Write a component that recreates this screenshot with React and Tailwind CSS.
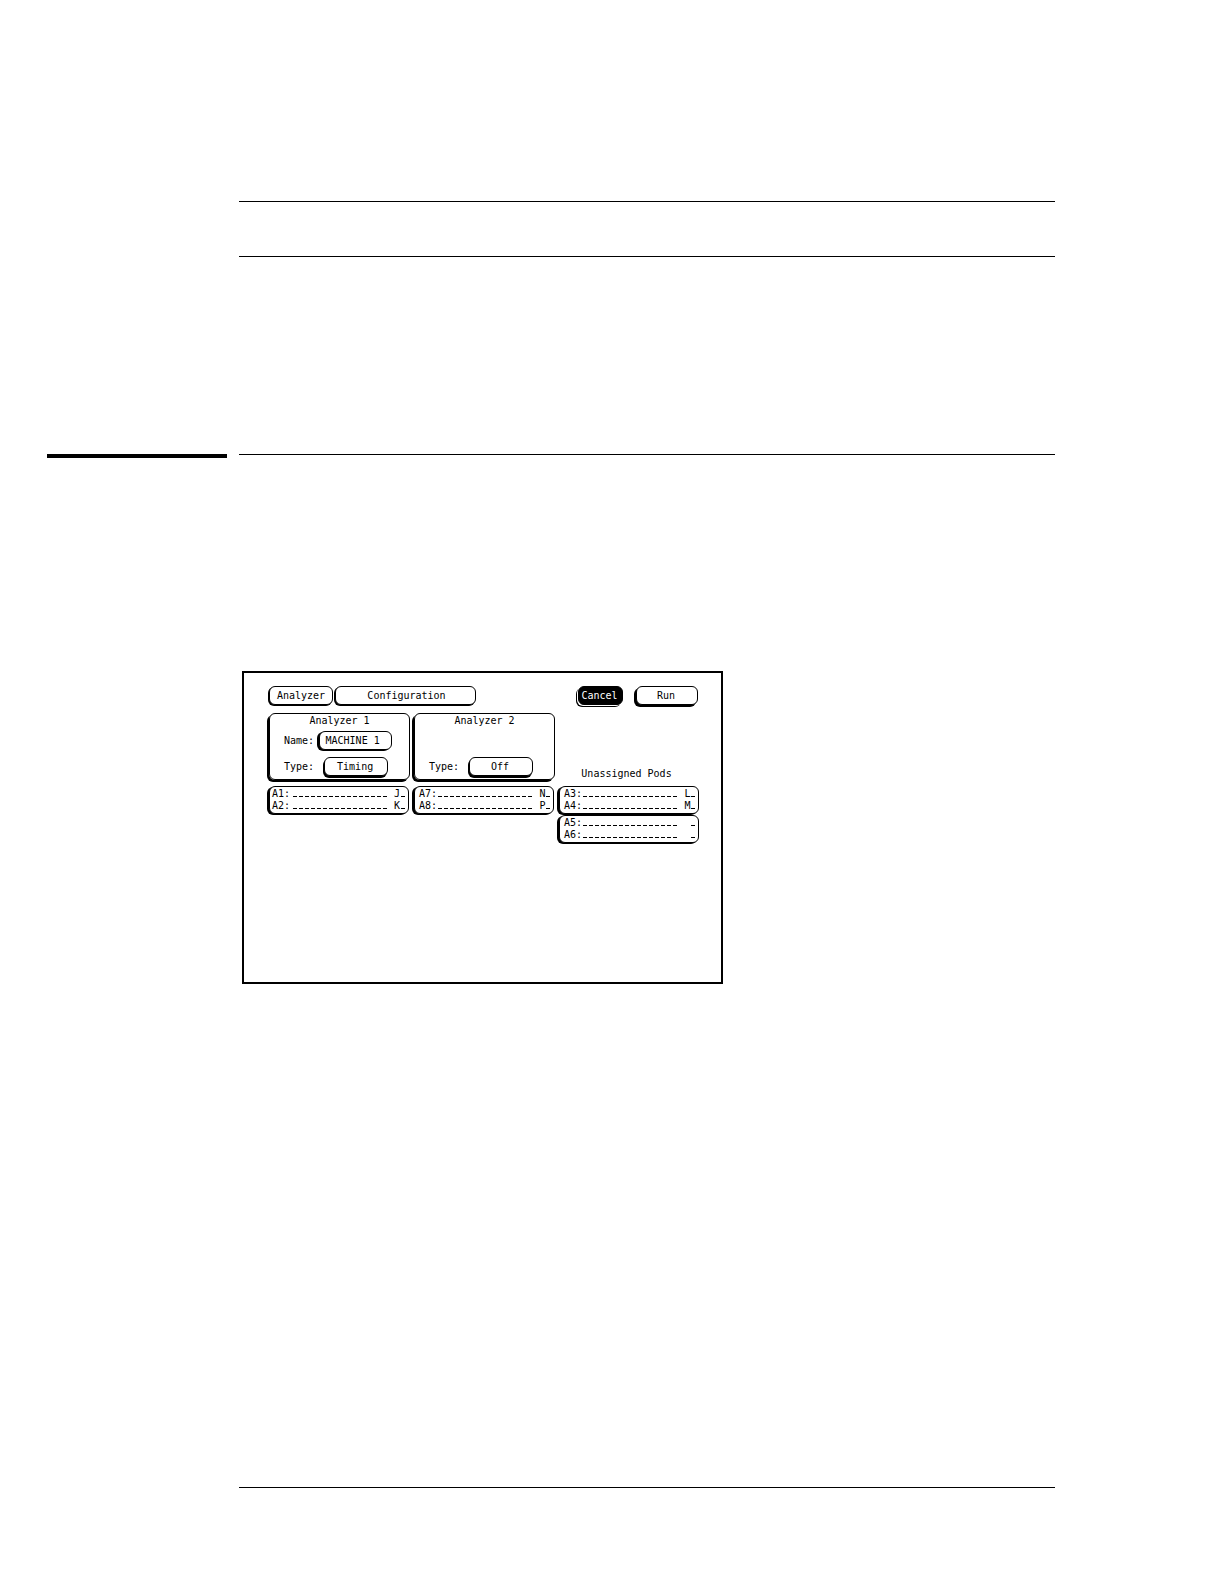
import React from "react";

const channels = "________________";

const podColumns = [
  {
    inset: "pl-0.5",
    pods: [[{ name: "A1", clock: "J" }, { name: "A2", clock: "K" }]],
  },
  {
    inset: "pl-1",
    pods: [[{ name: "A7", clock: "N" }, { name: "A8", clock: "P" }]],
  },
  {
    inset: "pl-1",
    pods: [
      [{ name: "A3", clock: "L" }, { name: "A4", clock: "M" }],
      [{ name: "A5", clock: "\u00a0" }, { name: "A6", clock: "\u00a0" }],
    ],
  },
];

const Key = ({ className, children, ...props }) => (
  <button
    className={`h-[19px] rounded-[6px] border border-black text-center ${className}`}
    {...props}
  >
    {children}
  </button>
);

const Panel = ({ title, children }) => (
  <section className="flex flex-col rounded-[6px] border border-black pb-[3px] shadow-[-2px_2px_0_#000]">
    <h2 className="text-center leading-[14px]">{title}</h2>
    {children}
  </section>
);

const TypeField = ({ id, value }) => (
  <div className="mt-auto flex items-center gap-[10px] pl-[14px]">
    <label htmlFor={id}>Type:</label>
    <Key id={id} className="w-16 bg-white pr-0.5 shadow-[-1px_2px_0_#000]">
      {value}
    </Key>
  </div>
);

// underscores sit close to the baseline, with a gap between cells
const Dashes = ({ children }) => (
  <span className="mask-[repeating-linear-gradient(90deg,transparent_0_1px,black_1px_5px,transparent_5px_6px)] pb-1.5 font-bold leading-[6px]">
    {children}
  </span>
);

// a pair of pods share one button
const PodPair = ({ rows, inset }) => (
  <button
    className={`rounded-[6px] border border-black bg-white py-px pr-0.5 text-left leading-[12px] shadow-[-2px_1px_0_#000] ${inset}`}
  >
    {rows.map((row) => (
      <span key={row.name} className="flex justify-between">
        <span>{row.name}:</span>
        <span className="flex">
          <Dashes>{channels}</Dashes>
          <span className="whitespace-pre"> {row.clock}</span>
          <Dashes>_</Dashes>
        </span>
      </span>
    ))}
  </button>
);

const AnalyzerScreen = () => (
  <div className="w-full max-w-[481px] border-2 border-black bg-white pt-[13px] pr-[21px] pb-[139px] pl-[25px] font-['DejaVu_Sans_Mono',monospace] text-[10px] leading-[12px] text-black">
    <div className="flex pr-0.5">
      <Key className="w-16 bg-white shadow-[-1px_1px_0_#000]">Analyzer</Key>
      <Key className="ml-0.5 w-[141px] bg-white pl-0.5 shadow-[-1px_1px_0_#000]">
        Configuration
      </Key>
      <Key className="ml-auto w-[45px] bg-black pr-0.5 text-white shadow-[-1px_1px_0_#fff,-2px_2px_0_#000]">
        Cancel
      </Key>
      <Key className="ml-[13px] w-[62px] bg-white pr-0.5 shadow-[-2px_2px_0_#000]">
        Run
      </Key>
    </div>

    <div className="mt-2 grid grid-cols-3 gap-1">
      <Panel title="Analyzer 1">
        <div className="mt-[3px] mb-[7px] flex items-center gap-[5px] pl-[14px]">
          <label htmlFor="name-1">Name:</label>
          <Key
            id="name-1"
            className="w-[73px] bg-white pr-1.5 shadow-[-2px_1px_0_#000]"
          >
            MACHINE 1
          </Key>
        </div>
        <TypeField id="type-1" value="Timing" />
      </Panel>
      <Panel title="Analyzer 2">
        <TypeField id="type-2" value="Off" />
      </Panel>
      <h2 className="self-end pr-1.5 text-center">Unassigned Pods</h2>
    </div>

    <div className="mt-1.5 grid grid-cols-3 items-start gap-1">
      {podColumns.map((column) => (
        <div key={column.pods[0][0].name} className="flex flex-col gap-px pr-px">
          {column.pods.map((rows) => (
            <PodPair key={rows[0].name} rows={rows} inset={column.inset} />
          ))}
        </div>
      ))}
    </div>
  </div>
);

const App = () => {
  return (
    <main className="grid grid-cols-[180px_1fr] gap-x-3 bg-white pt-[201px] pr-[169px] pb-24 pl-[47px]">
      <header className="col-start-2 mb-[197px] h-14 border-y border-black" />
      <div className="h-1 bg-black" />
      <section className="border-t border-black pt-[216px] pb-[503px] pl-[3px]">
        <AnalyzerScreen />
      </section>
      <footer className="col-start-2 border-t border-black" />
    </main>
  );
};

export default App;
